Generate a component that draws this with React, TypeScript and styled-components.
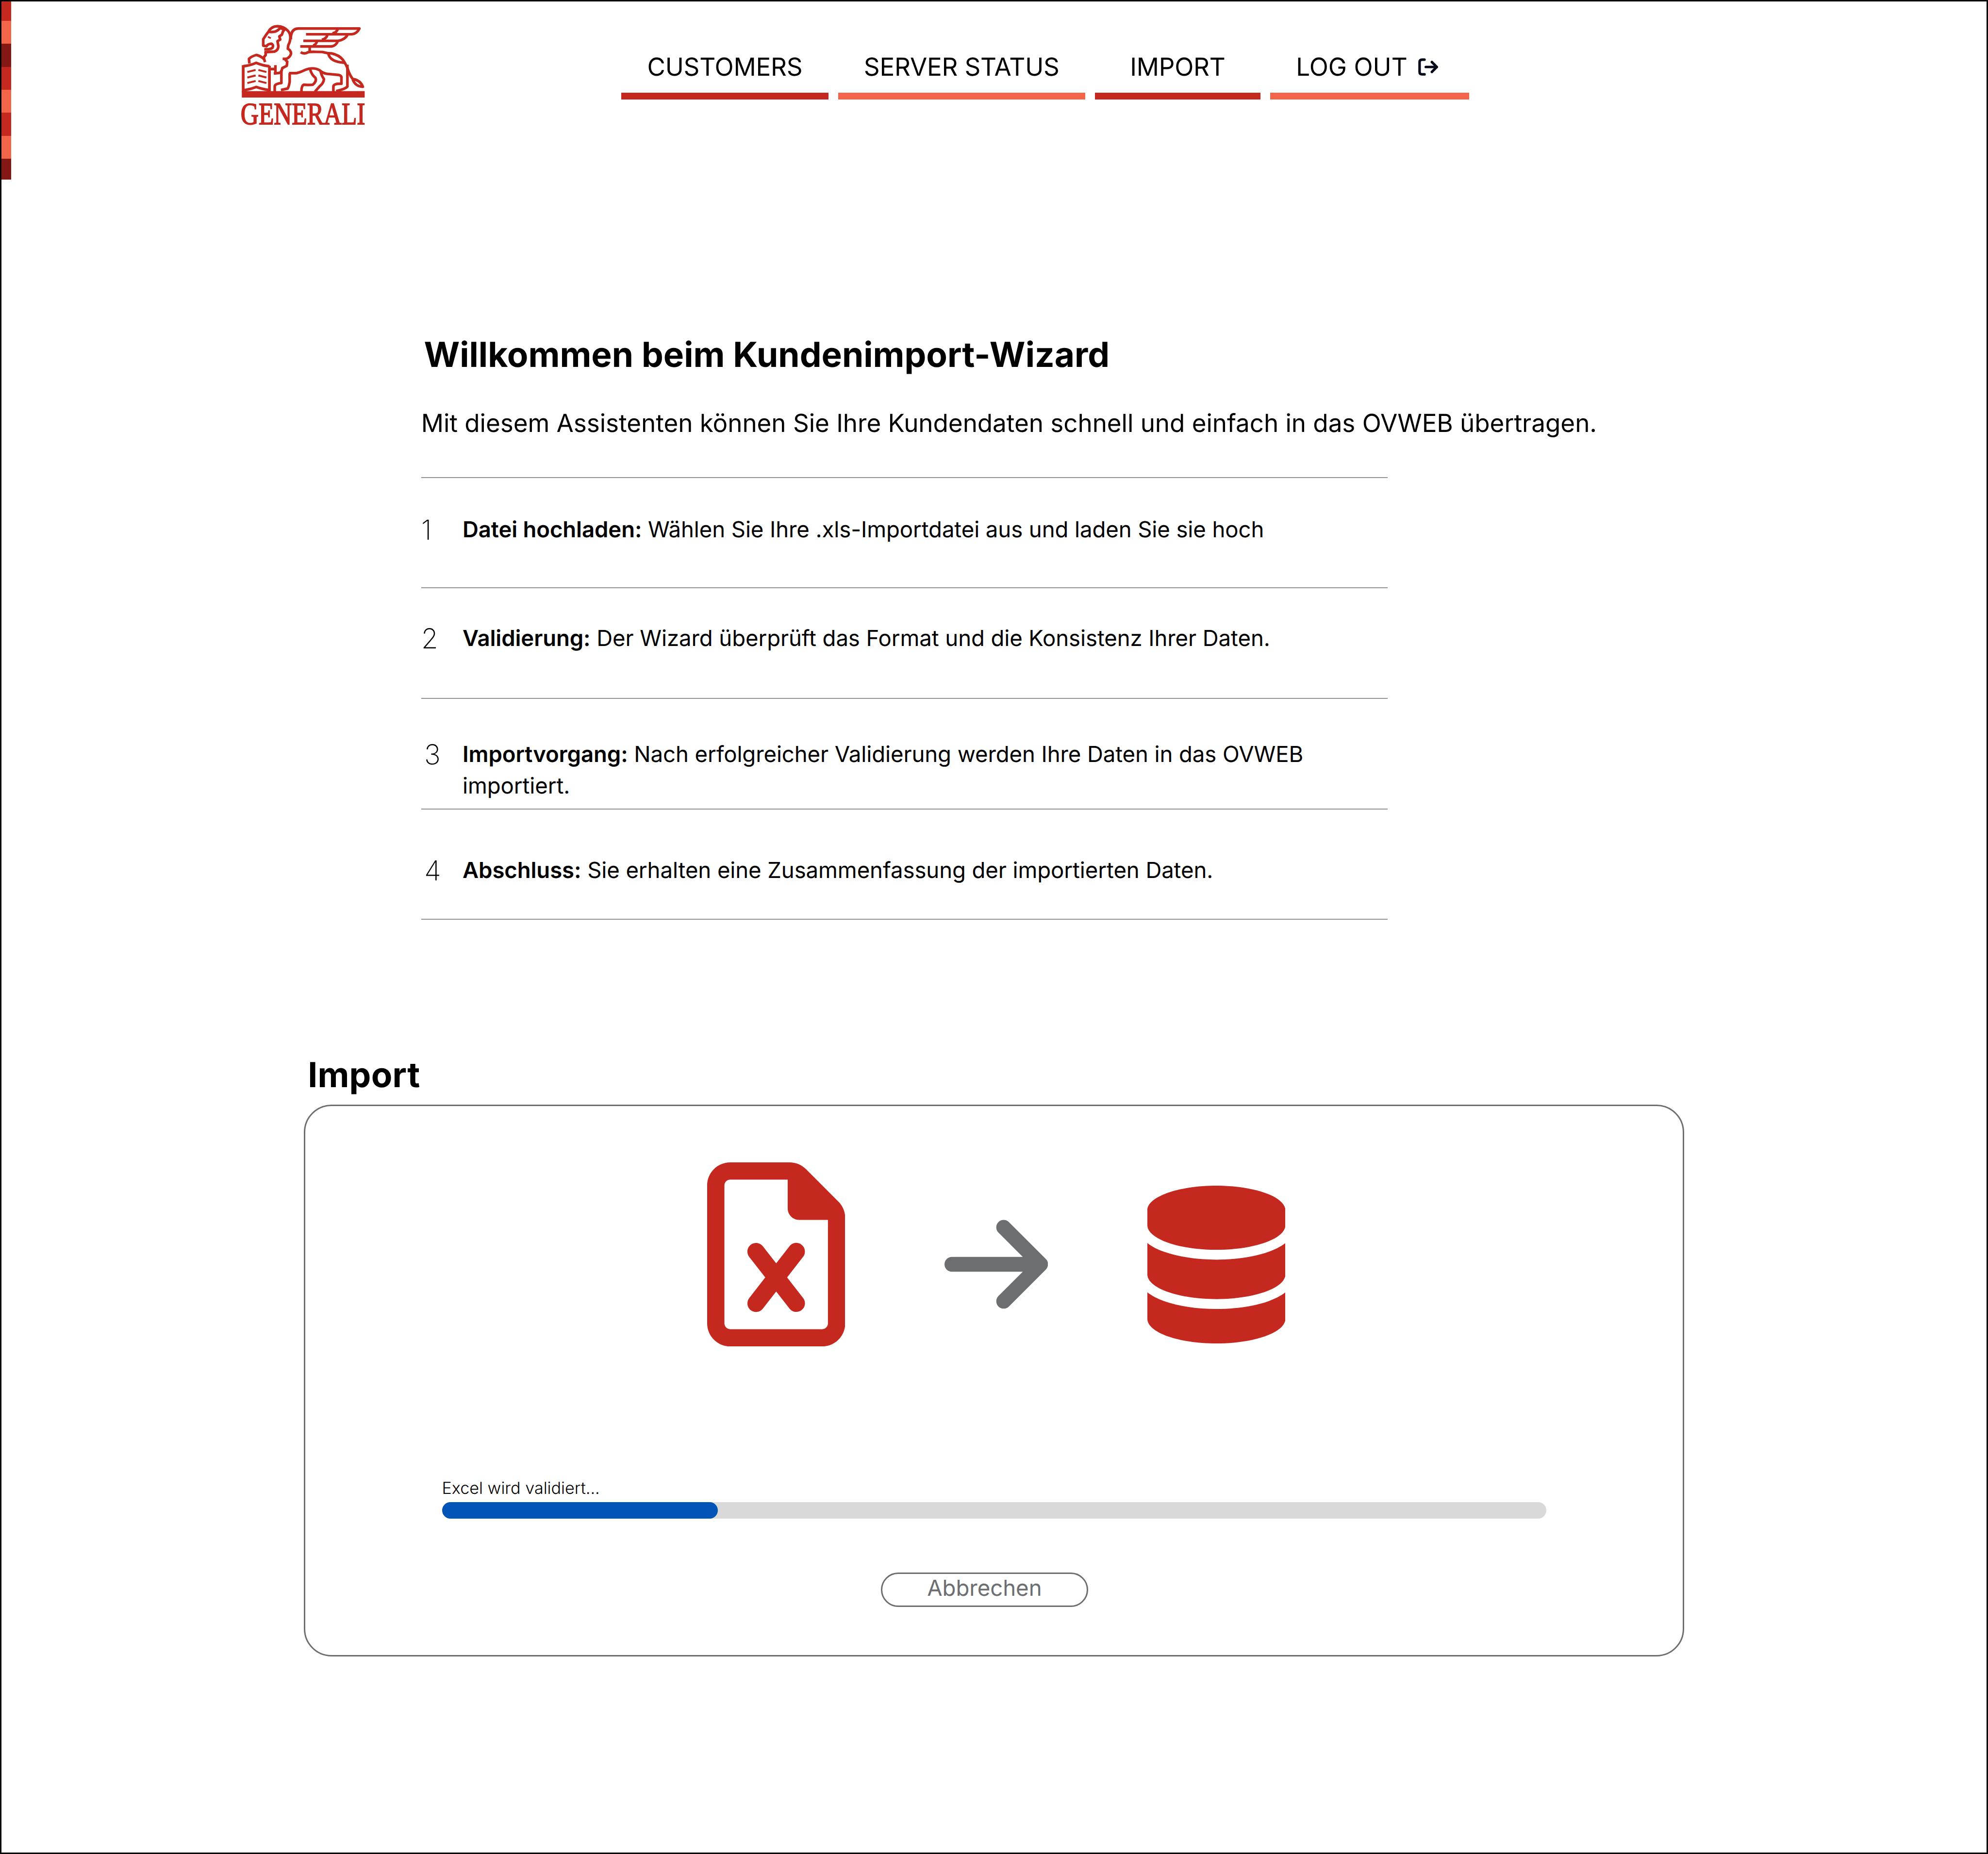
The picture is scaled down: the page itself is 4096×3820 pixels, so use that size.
import React from "react";
import styled, { createGlobalStyle } from "styled-components";
import { FaArrowRight, FaDatabase, FaRegFileExcel } from "react-icons/fa6";

/* The design is drawn on a 1440-unit wide board; u() turns board units into pixels. */
const SCALE = 4096 / 1440;
const u = (n: number) => `${+(n * SCALE).toFixed(3)}px`;

const RED = "#c5281e";
const CORAL = "#f26549";
const MAROON = "#831815";
const GREY = "#6d6e72";
const RULE = "#939497";

const GlobalStyle = createGlobalStyle`
  *, *::before, *::after { box-sizing: border-box; }
  html, body { margin: 0; padding: 0; background: #fff; }
  body {
    font-family: Inter, "Liberation Sans", sans-serif;
    text-rendering: geometricPrecision;
    color: #000;
    overflow: hidden;
  }
  h1, h2, p, ol { margin: 0; padding: 0; }
`;

const Page = styled.div`
  width: 4096px;
  height: 3820px;
  display: flex;
  align-items: flex-start;
  border: 3px solid #000;
  background: #fff;
`;

const StripeColumn = styled.div`
  display: flex;
  flex-direction: column;
  flex: none;
  width: ${u(7)};
`;

const Stripe = styled.div<{ $color: string; $height: number }>`
  height: ${(p) => u(p.$height)};
  background: ${(p) => p.$color};
`;

const Main = styled.div`
  flex: 1;
  display: flex;
  flex-direction: column;
  align-items: flex-start;
`;

const Header = styled.header`
  display: flex;
  align-items: flex-start;
  height: ${u(241)};
  padding-left: ${u(162)};
`;

const Logo = styled.svg`
  flex: none;
  width: ${u(100)};
  height: ${u(82.5)};
  margin-top: ${u(11.5)};
  overflow: visible;
`;

const Nav = styled.nav`
  display: flex;
  gap: ${u(7)};
  margin-left: ${u(180)};
`;

const NavItem = styled.a<{ $width: number; $color: string; $end?: number; $tracking?: string }>`
  display: flex;
  justify-content: center;
  gap: ${u(8)};
  width: ${(p) => u(p.$width)};
  height: ${u(71)};
  padding-top: ${u(35.4)};
  padding-right: ${(p) => u(p.$end ?? 0)};
  border-bottom: 14px solid ${(p) => p.$color};
  font-size: ${u(18)};
  line-height: ${u(24)};
  letter-spacing: ${(p) => p.$tracking ?? "-0.004em"};
  white-space: nowrap;
`;

const LogOutIcon = styled.svg`
  width: ${u(14.5)};
  height: ${u(12.67)};
  margin-top: ${u(5.7)};
`;

const Intro = styled.section`
  padding-left: ${u(297)};
`;

const Title = styled.h1`
  padding-left: ${u(2)};
  font-size: ${u(25)};
  line-height: ${u(30)};
  font-weight: 700;
  letter-spacing: 0.0005em;
`;

const Lead = styled.p`
  margin-top: ${u(23.45)};
  font-size: ${u(18)};
  line-height: ${u(22)};
  letter-spacing: -0.0011em;
  white-space: nowrap;
`;

const Steps = styled.ol`
  list-style: none;
  width: ${u(700)};
  margin-top: ${u(28.05)};
  border-bottom: 2px solid ${RULE};
`;

const Step = styled.li<{ $top: number }>`
  display: flex;
  align-items: flex-start;
  height: ${u(80)};
  padding-top: ${(p) => u(p.$top)};
  border-top: 2px solid ${RULE};
`;

const StepNumber = styled.span<{ $inset: number }>`
  flex: none;
  width: ${u(30)};
  padding-left: ${(p) => u(p.$inset)};
  font-size: ${u(20)};
  line-height: ${u(24)};
  font-weight: 200;
`;

const StepText = styled.p`
  width: ${u(640)};
  font-size: ${u(16)};
  line-height: ${u(23)};
  letter-spacing: -0.0016em;

  b { font-weight: 600; }
`;

const ImportSection = styled.section`
  margin-top: ${u(97.85)};
  padding-left: ${u(212)};
`;

const ImportTitle = styled.h2`
  padding-left: ${u(2.9)};
  font-size: ${u(25)};
  line-height: ${u(30)};
  font-weight: 700;
  letter-spacing: 0.004em;
`;

const Card = styled.div`
  display: flex;
  flex-direction: column;
  width: ${u(1000)};
  height: ${u(400)};
  margin-top: ${u(5.9)};
  border: 3px solid ${GREY};
  border-radius: ${u(20)};
`;

const Transfer = styled.div`
  display: flex;
  align-items: flex-start;
  gap: ${u(72)};
  height: ${u(268.7)};
  padding: ${u(40.9)} 0 0 ${u(291)};
`;

const Glyph = styled.span<{ $w: number; $h: number; $top: number; $color: string }>`
  display: flex;
  margin-top: ${(p) => u(p.$top)};
  color: ${(p) => p.$color};

  svg { width: ${(p) => u(p.$w)}; height: ${(p) => u(p.$h)}; }
`;

const Progress = styled.div`
  width: ${u(800)};
  margin-left: ${u(99)};
`;

const ProgressLabel = styled.p`
  padding-bottom: ${u(1.3)};
  font-size: ${u(12)};
  line-height: ${u(17)};
  font-weight: 300;
`;

const Track = styled.div`
  height: ${u(12)};
  border-radius: ${u(6)};
  background: #d9d9d9;
`;

const Fill = styled.div`
  height: 100%;
  border-radius: inherit;
  background: #0054b6;
`;

const CancelButton = styled.button`
  width: ${u(150)};
  height: ${u(25)};
  margin: ${u(39)} 0 0 ${u(417)};
  padding: 0 0 ${u(2.4)};
  border: 3px solid ${GREY};
  border-radius: ${u(12.5)};
  background: #fff;
  color: ${GREY};
  font: 400 ${u(16)} / ${u(20)} Inter, "Liberation Sans", sans-serif;
  text-rendering: geometricPrecision;
`;

const stripes: [string, number][] = [
  [RED, 14],
  [CORAL, 16.65],
  [MAROON, 16.7],
  [RED, 16.65],
  [CORAL, 16.65],
  [RED, 16.7],
  [CORAL, 16.65],
  [MAROON, 15],
];

const steps = [
  { top: 25.6, inset: 0, title: "Datei hochladen:", text: "Wählen Sie Ihre .xls-Importdatei aus und laden Sie sie hoch" },
  { top: 24.5, inset: 0, title: "Validierung:", text: "Der Wizard überprüft das Format und die Konsistenz Ihrer Daten." },
  { top: 28.5, inset: 2.2, title: "Importvorgang:", text: "Nach erfolgreicher Validierung werden Ihre Daten in das OVWEB importiert." },
  { top: 32.5, inset: 2.2, title: "Abschluss:", text: "Sie erhalten eine Zusammenfassung der importierten Daten." },
];

function GeneraliLogo() {
  return (
    <Logo viewBox="0 0 1200 990" role="img" aria-label="Generali">
      <g fill="none" stroke={RED} strokeWidth="23" strokeLinejoin="round">
        {/* head and mane */}
        <path d="M295 118 Q320 76 370 76 Q425 78 460 115 Q482 140 482 175 Q480 215 464 240 L460 272 Q488 288 488 315 Q480 345 448 360 L415 360 M436 366 L455 384 L451 420 L412 440 Q404 480 385 482 L338 488 M352 415 V480 M312 448 H350" />
        <path d="M300 112 L272 150 L246 190 V245 L275 250 Q285 230 318 228 Q340 240 325 265 Q300 280 255 277" />
        <path d="M290 125 Q360 135 392 92 M430 106 L418 122 L408 150 L386 165 L394 192 L370 206 L378 250 Q376 285 345 296 L266 302 L268 325 L250 348 L262 388" />
        <path d="M287 168 L312 180" strokeWidth="14" />
        <path d="M385 86 L440 106" strokeWidth="28" />
        {/* paw and book */}
        <path d="M126 400 L122 360 Q140 340 185 326 Q230 336 256 366" />
        <path d="M72 415 V650 M300 420 V650" strokeWidth="24" />
        <path d="M72 424 Q140 416 185 394 Q235 416 300 424 M80 632 Q140 622 185 604 Q235 622 300 632" />
        <path d="M108 474 L180 456 M204 456 L274 474 M108 522 L180 504 M204 504 L274 522 M108 570 L180 552 M204 552 L274 570" strokeWidth="17" />
        {/* front legs and belly */}
        <path d="M404 460 V570 Q346 576 346 600 V645 M476 484 V560 Q468 605 458 618 L400 630" />
        <path d="M470 484 H535 Q570 476 610 456 Q680 428 735 458 Q765 486 800 490 L905 500 Q930 508 926 530 V576 Q856 574 856 600 V645" />
        {/* hind legs */}
        <path d="M655 455 Q668 500 700 525 Q714 555 676 585 Q645 588 600 584 Q578 592 578 645 M745 470 Q755 510 774 535 Q772 570 735 600 L696 645" />
        <path d="M978 410 V600 Q960 622 880 640" />
        {/* back and tail */}
        <path d="M572 302 Q600 322 632 304 Q645 298 700 299 L760 300 Q800 312 840 312 Q905 325 940 370 Q975 420 990 475 Q1005 510 1024 535 Q1090 545 1112 602 Q1050 602 1024 540" />
        <path d="M812 314 Q825 385 955 394" />
        {/* wing */}
        <path d="M486 190 Q484 98 550 96 H1082 Q1062 140 1015 146 H618 M980 150 Q958 192 900 203 H595 M895 205 Q880 245 840 252 H568 M650 255 V296" />
        <path d="M894 100 Q886 130 848 138 M804 150 Q798 184 756 194 M714 206 Q706 236 680 243" />
      </g>
      <rect x="60" y="640" width="1068" height="56" fill={RED} />
      <text
        x="50"
        y="928"
        fontFamily='"Liberation Serif", serif'
        fontSize="270"
        textLength="1082"
        lengthAdjust="spacingAndGlyphs"
        fill={RED}
        stroke={RED}
        strokeWidth="8"
      >
        GENERALI
      </text>
    </Logo>
  );
}

export default function App() {
  const progress = 25;
  return (
    <>
      <GlobalStyle />
      <Page>
        <StripeColumn>
          {stripes.map(([color, height], i) => (
            <Stripe key={i} $color={color} $height={height} />
          ))}
        </StripeColumn>
        <Main>
          <Header>
            <GeneraliLogo />
            <Nav>
              <NavItem $width={150} $color={RED}>CUSTOMERS</NavItem>
              <NavItem $width={179} $color={CORAL}>SERVER STATUS</NavItem>
              <NavItem $width={120} $color={RED}>IMPORT</NavItem>
              <NavItem $width={144} $color={CORAL} $end={3.4} $tracking="0">
                LOG OUT
                <LogOutIcon viewBox="58 55 174 152" fill="none" stroke="#020817" strokeWidth="22" strokeLinecap="round" strokeLinejoin="round">
                  <path d="M113 67 H92 Q70 67 70 89 V174 Q70 195 92 195 H113" />
                  <path d="M124 131 H220 M177 88 L220 131 L177 174" />
                </LogOutIcon>
              </NavItem>
            </Nav>
          </Header>
          <Intro>
            <Title>Willkommen beim Kundenimport-Wizard</Title>
            <Lead>Mit diesem Assistenten können Sie Ihre Kundendaten schnell und einfach in das OVWEB übertragen.</Lead>
            <Steps>
              {steps.map((s, i) => (
                <Step key={s.title} $top={s.top}>
                  <StepNumber $inset={s.inset}>{i + 1}</StepNumber>
                  <StepText>
                    <b>{s.title}</b> {s.text}
                  </StepText>
                </Step>
              ))}
            </Steps>
          </Intro>
          <ImportSection>
            <ImportTitle>Import</ImportTitle>
            <Card>
              <Transfer>
                <Glyph $w={100} $h={133.33} $top={0} $color={RED}><FaRegFileExcel /></Glyph>
                <Glyph $w={75} $h={85.71} $top={31.1} $color={GREY}><FaArrowRight /></Glyph>
                <Glyph $w={100} $h={114.29} $top={17.1} $color={RED}><FaDatabase /></Glyph>
              </Transfer>
              <Progress>
                <ProgressLabel>Excel wird validiert...</ProgressLabel>
                <Track>
                  <Fill style={{ width: `${progress}%` }} />
                </Track>
              </Progress>
              <CancelButton type="button">Abbrechen</CancelButton>
            </Card>
          </ImportSection>
        </Main>
      </Page>
    </>
  );
}
